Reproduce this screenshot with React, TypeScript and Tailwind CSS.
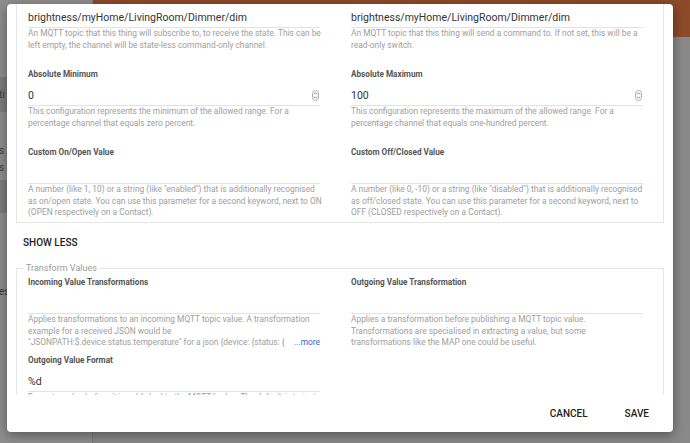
import React from "react";

function Spinner() {
  return (
    <svg width="7" height="11" viewBox="0 0 7 11" className="shrink-0 mr-[1px]">
      <rect x="0.5" y="0.5" width="6" height="10" rx="3" fill="white" stroke="#9a9a9a" strokeWidth="0.8" />
      <path d="M2 4.3 L3.5 2.8 L5 4.3" fill="none" stroke="#555" strokeWidth="0.8" />
      <path d="M2 6.7 L3.5 8.2 L5 6.7" fill="none" stroke="#555" strokeWidth="0.8" />
    </svg>
  );
}

type FieldProps = {
  label: string;
  value?: string;
  desc: string;
  spinner?: boolean;
  more?: boolean;
  h?: string;
};

function Field({ label, value, desc, spinner, more, h }: FieldProps) {
  return (
    <div className={`${h ?? "h-[78px]"} flex flex-col pl-[11px] pr-[20px] min-w-0`}>
      <div className="h-[14px] leading-[14px] text-[8.2px] font-bold text-[#555] whitespace-nowrap">{label}</div>
      <div className="mt-[5px] h-[20px] border-b border-[#e2e2e2] flex items-center justify-between text-[10.5px] text-[#333] whitespace-nowrap">
        <span>{value}</span>
        {spinner && <Spinner />}
      </div>
      {more ? (
        <div className="relative h-[34.5px] overflow-hidden text-[8.4px] leading-[11.5px] text-[#9e9e9e]">
          {desc}
          <span className="absolute right-0 top-[23px] bg-white pl-[5px] text-[#3f5bd4]">...more</span>
        </div>
      ) : (
        <div className="-mr-[3px] text-[8.4px] leading-[11.5px] text-[#9e9e9e]">{desc}</div>
      )}
    </div>
  );
}

export default function App() {
  return (
    <div className="relative w-[690px] h-[443px] overflow-hidden bg-[#8a8a8a] [font-family:Roboto,'Noto_Sans',sans-serif] flex">
      {/* background page (dimmed) */}
      <div className="w-[93px] h-full bg-[#8e8e8e] border-r border-[#7c7c7c] flex flex-col text-[10px] text-[#3a3a3a]">
        <div className="h-[77px]" />
        <div className="h-[35px] bg-[#7d7d7d] flex items-center">
          <span className="-ml-[1px]">ti</span>
        </div>
        <div className="h-[68px] pt-[30px] leading-[17px]">
          <div className="-ml-[1px]">s</div>
          <div className="-ml-[1px]">s</div>
        </div>
        <div className="h-[33px] bg-[#7d7d7d]" />
        <div className="pt-[72px] leading-[14px]">
          <span className="-ml-[1px]">es</span>
        </div>
      </div>
      <div className="flex-1 flex flex-col">
        <div className="h-[37px] bg-[#8c4a28]" />
        <div className="flex-1 bg-[#898989]" />
      </div>

      {/* dialog */}
      <div className="absolute left-[7px] top-[4px] w-[666px] h-[428px] bg-white rounded-[4px] shadow-[0_3px_12px_rgba(0,0,0,0.4)] flex flex-col">
        <div className="h-[391px] overflow-hidden px-[9px]">
          <div className="-mt-[23px] border border-[#e6e6e6] pt-[7px]">
            <div className="grid grid-cols-2">
              <Field
                label="MQTT State Topic"
                value="brightness/myHome/LivingRoom/Dimmer/dim"
                desc="An MQTT topic that this thing will subscribe to, to receive the state. This can be left empty, the channel will be state-less command-only channel."
              />
              <Field
                label="MQTT Command Topic"
                value="brightness/myHome/LivingRoom/Dimmer/dim"
                desc="An MQTT topic that this thing will send a command to. If not set, this will be a read-only switch."
              />
              <Field
                label="Absolute Minimum"
                value="0"
                spinner
                desc="This configuration represents the minimum of the allowed range. For a percentage channel that equals zero percent."
              />
              <Field
                label="Absolute Maximum"
                value="100"
                spinner
                desc="This configuration represents the maximum of the allowed range. For a percentage channel that equals one-hundred percent."
              />
              <Field
                label="Custom On/Open Value"
                h="h-[77px]"
                desc={'A number (like 1, 10) or a string (like "enabled") that is additionally recognised as on/open state. You can use this parameter for a second keyword, next to ON (OPEN respectively on a Contact).'}
              />
              <Field
                label="Custom Off/Closed Value"
                h="h-[77px]"
                desc={'A number (like 0, -10) or a string (like "disabled") that is additionally recognised as off/closed state. You can use this parameter for a second keyword, next to OFF (CLOSED respectively on a Contact).'}
              />
            </div>
          </div>

          <div className="pt-[14px] pb-[13px] pl-[7px] text-[10px] leading-[12px] font-medium text-[#222]">SHOW LESS</div>

          <fieldset className="border border-[#e6e6e6] pt-[1px]">
            <legend className="ml-[7px] px-[2px] text-[9px] leading-[12px] text-[#9a9a9a]">Transform Values</legend>
            <div className="grid grid-cols-2">
              <Field
                label="Incoming Value Transformations"
                more
                desc={'Applies transformations to an incoming MQTT topic value. A transformation example for a received JSON would be "JSONPATH:$.device.status.temperature" for a json {device: {status: { temperature: 23.2 }}}.'}
              />
              <Field
                label="Outgoing Value Transformation"
                desc="Applies a transformation before publishing a MQTT topic value. Transformations are specialised in extracting a value, but some transformations like the MAP one could be useful."
              />
              <Field
                label="Outgoing Value Format"
                value="%d"
                desc="Format a value before it is published to the MQTT broker. The default is to just pass the channel/item state."
              />
              <div />
            </div>
          </fieldset>
        </div>
        <div className="h-[37px] flex items-center justify-end pr-[24px] gap-[37px] text-[10px] font-medium text-[#222]">
          <span>CANCEL</span>
          <span>SAVE</span>
        </div>
      </div>
    </div>
  );
}
